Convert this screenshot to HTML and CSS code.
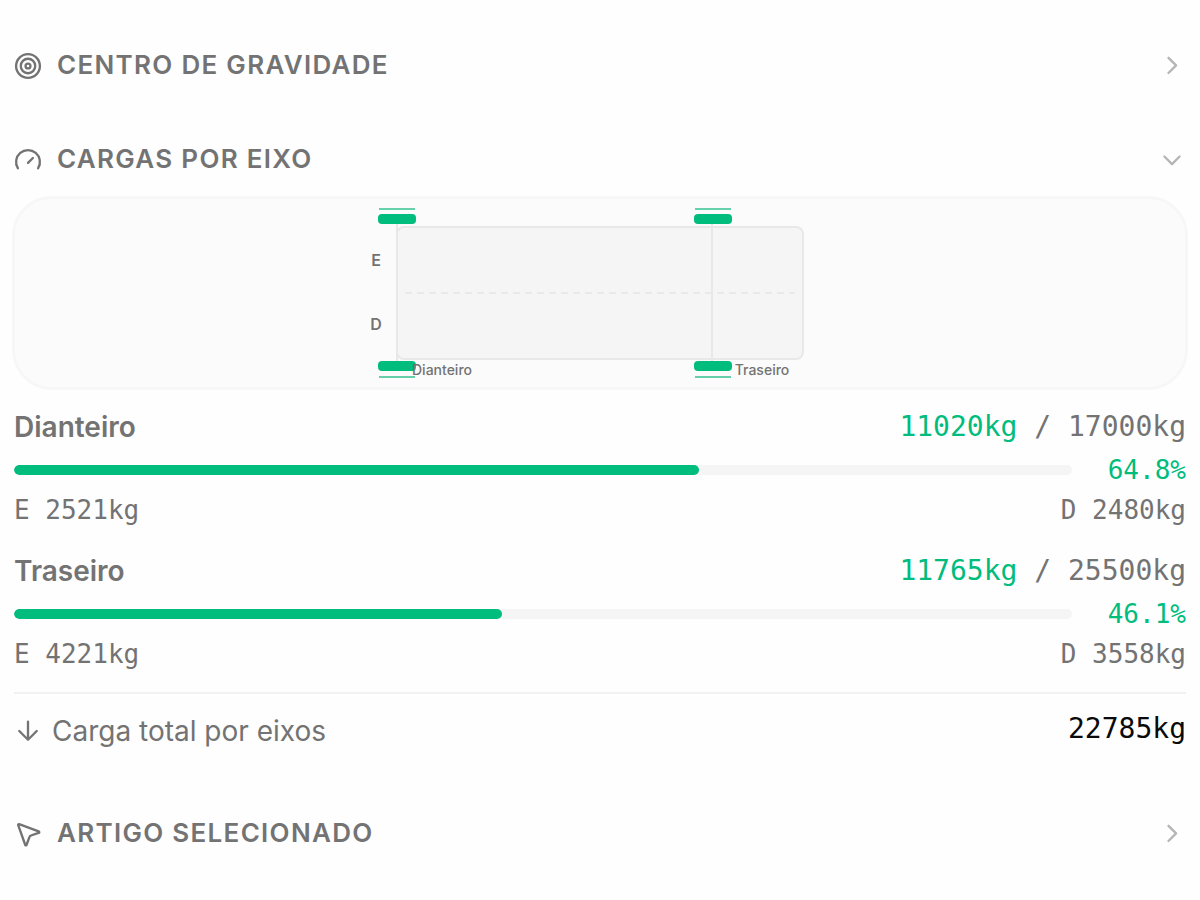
FILE: index.html
```
<!DOCTYPE html>
<html lang="pt">
<head>
    <meta charset="UTF-8">
    <meta name="viewport" content="width=device-width, initial-scale=1.0">
    <title>Cargas por eixo</title>
    <link rel="stylesheet" href="styles.css">
</head>
<body>

    <main class="panel">
        <button class="section-header" type="button" aria-expanded="false">
            <svg class="icon" viewBox="0 0 24 24">
                <circle cx="12" cy="12" r="10.2"/>
                <circle cx="12" cy="12" r="6.2"/>
                <circle cx="12" cy="12" r="2.1"/>
            </svg>
            <span class="section-title">Centro de gravidade</span>
            <svg class="icon chevron" viewBox="0 0 24 24"><path d="M9 18l6.500-6.500L9 5"/></svg>
        </button>

        <section class="section">
            <button class="section-header" type="button" aria-expanded="true">
                <svg class="icon" viewBox="0 0 24 24">
                    <path d="M12 14.500l4.200-4.200"/>
                    <path d="M3.300 19a10.200 10.200 0 1 1 17.400 0"/>
                </svg>
                <span class="section-title">Cargas por eixo</span>
                <svg class="icon chevron" viewBox="0 0 24 24"><path d="M5.500 9l6.500 6.500L18.500 9"/></svg>
            </button>

            <div class="diagram">
                <svg class="truck" viewBox="0 0 480 170" role="img" aria-label="Eixos do veículo">
                    <!-- cargo bed -->
                    <rect class="bed" x="37" y="19" width="406" height="132" rx="7"/>
                    <path class="center-line" d="M45 85h390"/>
                    <path class="axle-line" d="M37 16v138M352 16v138"/>
                    <!-- front wheels -->
                    <rect class="wheel" x="18" y="6" width="38" height="10" rx="4"/>
                    <rect class="wheel" x="18" y="153" width="38" height="10" rx="4"/>
                    <path class="wheel-outer" d="M19 1h36M19 169h36"/>
                    <!-- rear wheels -->
                    <rect class="wheel" x="334" y="6" width="38" height="10" rx="4"/>
                    <rect class="wheel" x="334" y="153" width="38" height="10" rx="4"/>
                    <path class="wheel-outer" d="M335 1h36M335 169h36"/>
                    <text class="side-label" x="16" y="58">E</text>
                    <text class="side-label" x="16" y="122">D</text>
                    <text class="axle-label" x="82" y="167">Dianteiro</text>
                    <text class="axle-label" x="402" y="167">Traseiro</text>
                </svg>
            </div>

            <div class="axles">
                <div class="axle">
                    <div class="row">
                        <span class="axle-name">Dianteiro</span>
                        <span class="load"><span class="current">11020kg</span> / 17000kg</span>
                    </div>
                    <div class="row usage">
                        <div class="bar"><div class="bar-fill" style="width: 64.8%"></div></div>
                        <span class="percent">64.8%</span>
                    </div>
                    <div class="row sides">
                        <span>E 2521kg</span>
                        <span>D 2480kg</span>
                    </div>
                </div>

                <div class="axle">
                    <div class="row">
                        <span class="axle-name">Traseiro</span>
                        <span class="load"><span class="current">11765kg</span> / 25500kg</span>
                    </div>
                    <div class="row usage">
                        <div class="bar"><div class="bar-fill" style="width: 46.1%"></div></div>
                        <span class="percent">46.1%</span>
                    </div>
                    <div class="row sides">
                        <span>E 4221kg</span>
                        <span>D 3558kg</span>
                    </div>
                </div>
            </div>

            <div class="row total">
                <span class="total-label">
                    <svg class="icon" viewBox="0 0 24 24"><path d="M12 4v15M4.500 12l7.500 7.500 7.500-7.500"/></svg>
                    Carga total por eixos
                </span>
                <span class="total-value">22785kg</span>
            </div>
        </section>

        <button class="section-header" type="button" aria-expanded="false">
            <svg class="icon" viewBox="0 0 24 24">
                <path d="M3.600 4.400l6 16.800a.6.6 0 0 0 1.200 0l2.400-6.600a2 2 0 0 1 1.300-1.300l6.600-2.300a.6.6 0 0 0 0-1.200L4.400 3.600a.6.6 0 0 0-.8.8z"/>
            </svg>
            <span class="section-title">Artigo selecionado</span>
            <svg class="icon chevron" viewBox="0 0 24 24"><path d="M9 18l6.500-6.500L9 5"/></svg>
        </button>
    </main>

</body>
</html>
```
FILE: styles.css
```
* {
    box-sizing: border-box;
}

body {
    margin: 0;
    background-color: #fefefe;
    color: #737373;
    font-family: Inter, 'Liberation Sans', sans-serif;
    font-size: 28px;
}

.panel {
    display: flex;
    flex-direction: column;
    gap: 22px;
    padding: 30px 12px;
}

.section-header {
    display: flex;
    align-items: center;
    gap: 15px;
    width: 100%;
    height: 72px;
    padding: 0 2px;
    border: none;
    background: none;
    color: inherit;
    font-family: inherit;
    font-size: 26px;
    font-weight: 600;
    text-align: left;
    cursor: pointer;
}

.section-title {
    flex: 1;
    letter-spacing: 0.05em;
    line-height: 32px;
    padding-bottom: 3px;
    text-transform: uppercase;
}

.icon {
    flex: none;
    width: 28px;
    height: 28px;
    fill: none;
    stroke: currentColor;
    stroke-width: 2;
    stroke-linecap: round;
    stroke-linejoin: round;
}

.chevron {
    color: #b5b5b5;
}

/* Vehicle seen from above */
.diagram {
    display: flex;
    justify-content: center;
    padding: 9px;
    background-color: #fbfbfb;
    border: 3px solid #f7f7f7;
    border-radius: 40px;
}

.truck {
    width: 480px;
    height: 170px;
}

.bed {
    fill: #f5f5f5;
    stroke: #e8e8e8;
    stroke-width: 2;
}

.axle-line {
    stroke: #e8e8e8;
    stroke-width: 2;
}

.center-line {
    stroke: #e9e9e9;
    stroke-width: 2;
    stroke-dasharray: 7 5;
}

.wheel {
    fill: #00bc7d;
}

.wheel-outer {
    stroke: #66d0aa;
    stroke-width: 2;
}

.side-label,
.axle-label {
    fill: #737373;
    text-anchor: middle;
}

.side-label {
    font-size: 16px;
    font-weight: 600;
}

.axle-label {
    font-size: 14px;
    font-weight: 500;
}

.axles {
    display: flex;
    flex-direction: column;
    gap: 24px;
    padding: 17px 2px 21px;
}

.axle {
    display: flex;
    flex-direction: column;
    gap: 8px;
}

.row {
    display: flex;
    align-items: center;
    justify-content: space-between;
    line-height: 40px;
}

.axle-name {
    font-weight: 600;
}

.load,
.percent,
.sides,
.total-value {
    font-family: 'DejaVu Sans Mono', 'Liberation Mono', monospace;
}

.current,
.percent {
    color: #00bc7d;
}

.usage,
.sides {
    font-size: 26px;
    line-height: 30px;
}

.usage {
    gap: 36px;
}

.sides {
    padding: 2px 0;
}

.bar {
    flex: 1;
    height: 10px;
    border-radius: 5px;
    background-color: #f5f5f5;
    overflow: hidden;
}

.bar-fill {
    height: 100%;
    border-radius: 5px;
    background-color: #00bc7d;
}

.total {
    margin: 0 2px;
    padding: 15px 0 24px;
    border-top: 2px solid #f2f2f2;
}

.total-label {
    display: flex;
    align-items: center;
    gap: 10px;
}

.total-value {
    padding-bottom: 3px;
    color: #0a0a0a;
}
```
